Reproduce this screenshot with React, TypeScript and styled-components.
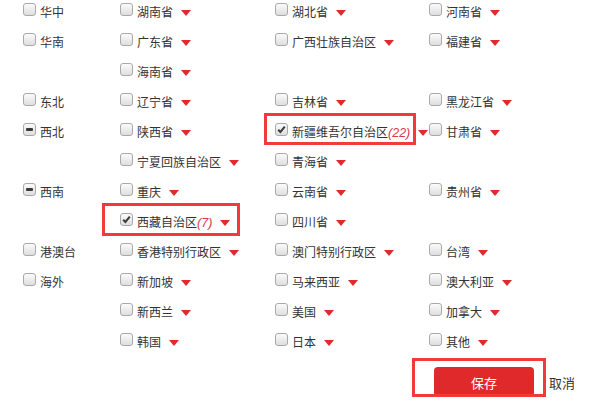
import React from "react";
import styled, { createGlobalStyle, css } from "styled-components";

const GlobalStyle = createGlobalStyle`
  html, body { margin: 0; padding: 0; background: #fff; }
  body {
    font-family: "Noto Sans CJK SC", "Liberation Sans", sans-serif;
    font-size: 12px;
    color: #333;
  }
`;

type CheckState = "none" | "checked" | "partial";

const Page = styled.div`
  padding-left: 23px;
  width: 577px;
`;

const RegionRow = styled.div`
  display: flex;
  align-items: flex-start;
`;

const RegionCell = styled.div`
  width: 97px;
  height: 30px;
  display: flex;
  align-items: flex-start;
  flex-shrink: 0;
`;

const ProvinceGrid = styled.div`
  display: grid;
  grid-template-columns: 155px 154px 155px;
  grid-auto-rows: 30px;
`;

const Item = styled.div`
  position: relative;
  display: flex;
  align-items: flex-start;
  white-space: nowrap;
  height: 30px;
`;

const Box = styled.span<{ $state: CheckState }>`
  position: relative;
  box-sizing: border-box;
  width: 13px;
  height: 13px;
  margin-top: 3px;
  margin-right: 4px;
  flex-shrink: 0;
  border: 1px solid #a9a9a9;
  border-radius: 3px;
  background: linear-gradient(#fbfbfb, #dedede);
  display: flex;
  align-items: center;
  justify-content: center;
  ${(p) =>
    p.$state === "partial" &&
    css`
      &::after {
        content: "";
        width: 7px;
        height: 3px;
        border-radius: 1px;
        background: #3a3a3a;
      }
    `}
`;

const Label = styled.span`
  line-height: 23px;
  font-size: 12px;
  color: #333;
`;

const Count = styled.span`
  font-family: "Liberation Sans", Arial, sans-serif;
  font-style: italic;
  font-size: 12.5px;
  color: #d8394e;
`;

const Arrow = styled.span`
  width: 0;
  height: 0;
  margin-top: 10px;
  margin-left: 8px;
  flex-shrink: 0;
  border-top: 6px solid #e02a2c;
  border-left: 5px solid transparent;
  border-right: 5px solid transparent;
`;

const Mark = styled.span<{ $left: number; $top: number; $w: number; $h: number }>`
  position: absolute;
  left: ${(p) => p.$left}px;
  top: ${(p) => p.$top}px;
  width: ${(p) => p.$w}px;
  height: ${(p) => p.$h}px;
  box-sizing: border-box;
  border: 3px solid #f23a3b;
  pointer-events: none;
`;

const Footer = styled.div`
  display: flex;
  align-items: center;
  margin-left: 411px;
  margin-top: 7px;
  gap: 15px;
`;

const SaveWrap = styled.div`
  position: relative;
`;

const SaveButton = styled.button`
  width: 100px;
  height: 30px;
  border: none;
  border-radius: 4px;
  background: #e0292b;
  color: #fff;
  font-family: "Noto Sans CJK SC", sans-serif;
  font-size: 13px;
  letter-spacing: 0;
  padding: 0;
  cursor: pointer;
`;

const Cancel = styled.span`
  font-size: 13px;
  color: #333;
  cursor: pointer;
`;

const CheckIcon = () => (
  <svg width="9" height="9" viewBox="0 0 9 9">
    <path d="M1.2 4.8 L3.4 7 L7.8 1.6" fill="none" stroke="#3b3b3b" strokeWidth="2" />
  </svg>
);

const Checkbox: React.FC<{ state: CheckState }> = ({ state }) => (
  <Box $state={state}>{state === "checked" && <CheckIcon />}</Box>
);

type Prov = {
  n: string;
  checked?: boolean;
  count?: number;
  mark?: { left: number; top: number; w: number; h: number };
};
type Region = { name: string; state: CheckState; items: Prov[] };

const regions: Region[] = [
  { name: "华中", state: "none", items: [{ n: "湖南省" }, { n: "湖北省" }, { n: "河南省" }] },
  {
    name: "华南",
    state: "none",
    items: [{ n: "广东省" }, { n: "广西壮族自治区" }, { n: "福建省" }, { n: "海南省" }],
  },
  { name: "东北", state: "none", items: [{ n: "辽宁省" }, { n: "吉林省" }, { n: "黑龙江省" }] },
  {
    name: "西北",
    state: "partial",
    items: [
      { n: "陕西省" },
      {
        n: "新疆维吾尔自治区",
        checked: true,
        count: 22,
        mark: { left: -11, top: -7, w: 152, h: 32 },
      },
      { n: "甘肃省" },
      { n: "宁夏回族自治区" },
      { n: "青海省" },
    ],
  },
  {
    name: "西南",
    state: "partial",
    items: [
      { n: "重庆" },
      { n: "云南省" },
      { n: "贵州省" },
      { n: "西藏自治区", checked: true, count: 7, mark: { left: -18, top: -7, w: 138, h: 33 } },
      { n: "四川省" },
    ],
  },
  {
    name: "港澳台",
    state: "none",
    items: [{ n: "香港特别行政区" }, { n: "澳门特别行政区" }, { n: "台湾" }],
  },
  {
    name: "海外",
    state: "none",
    items: [
      { n: "新加坡" },
      { n: "马来西亚" },
      { n: "澳大利亚" },
      { n: "新西兰" },
      { n: "美国" },
      { n: "加拿大" },
      { n: "韩国" },
      { n: "日本" },
      { n: "其他" },
    ],
  },
];

export default function App() {
  return (
    <>
      <GlobalStyle />
      <Page>
        {regions.map((r) => (
          <RegionRow key={r.name}>
            <RegionCell>
              <Checkbox state={r.state} />
              <Label>{r.name}</Label>
            </RegionCell>
            <ProvinceGrid>
              {r.items.map((p) => (
                <Item key={p.n}>
                  <Checkbox state={p.checked ? "checked" : "none"} />
                  <Label>
                    {p.n}
                    {p.count !== undefined && <Count>({p.count})</Count>}
                  </Label>
                  <Arrow />
                  {p.mark && (
                    <Mark $left={p.mark.left} $top={p.mark.top} $w={p.mark.w} $h={p.mark.h} />
                  )}
                </Item>
              ))}
            </ProvinceGrid>
          </RegionRow>
        ))}
        <Footer>
          <SaveWrap>
            <SaveButton>保存</SaveButton>
            <Mark $left={-22} $top={-9} $w={134} $h={39} />
          </SaveWrap>
          <Cancel>取消</Cancel>
        </Footer>
      </Page>
    </>
  );
}
